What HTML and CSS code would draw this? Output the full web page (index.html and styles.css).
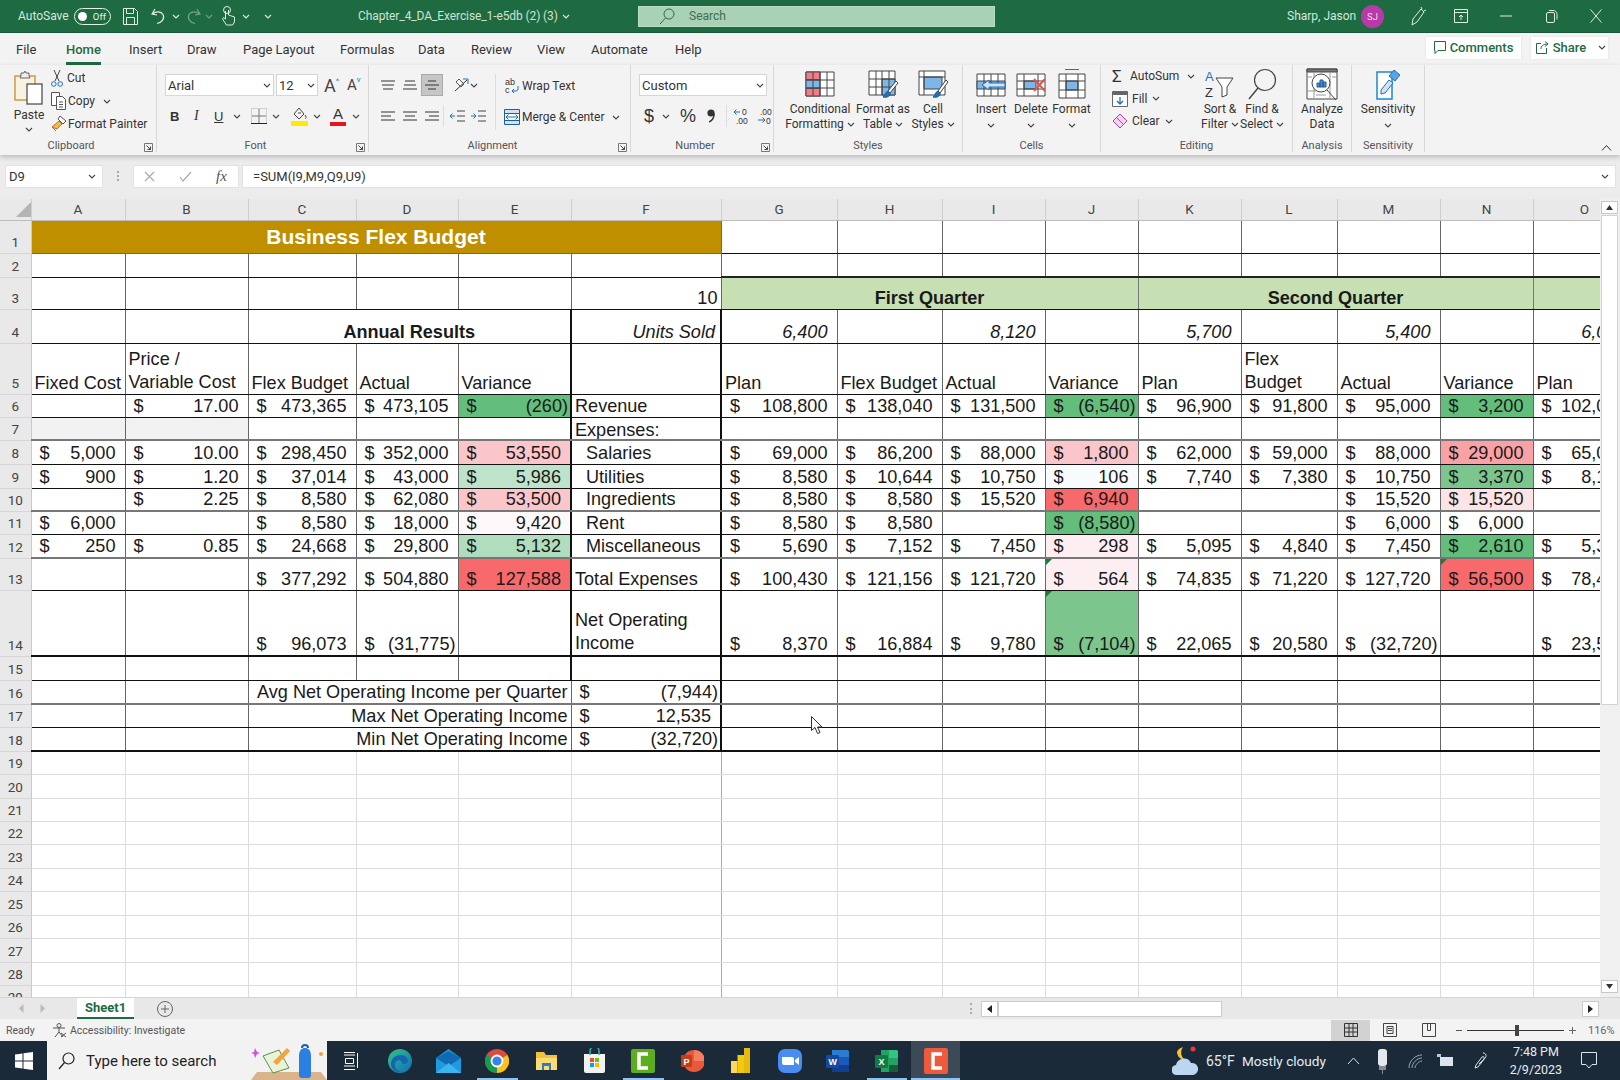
FILE: index.html
```html
<!DOCTYPE html>
<html lang="en">
<head>
<meta charset="utf-8">
<title>Chapter_4_DA_Exercise_1-e5db (2) (3) - Excel</title>
<link rel="stylesheet" href="styles.css">
</head>
<body>
<svg class="defs" aria-hidden="true">
  <symbol id="chev" viewBox="0 0 8 5"><path d="M1 1l3 3 3-3" fill="none" stroke="currentColor" stroke-width="1.1"/></symbol>
  <symbol id="launch" viewBox="0 0 9 9"><path d="M.5 8.500v-8h8v8z" fill="none" stroke="#777"/><path d="M2.500 2.500l4 4M6.500 3.500v3h-3" fill="none" stroke="#444"/></symbol>
</svg>
<div class="app">
  <header class="titlebar">
    <span class="ts ml18">AutoSave</span>
    <span class="toggle"><span class="knob"></span>Off</span>
    <svg class="ml12" width="15" height="17" viewBox="0 0 15 17" fill="none" stroke="#dfeee5"><path d="M.5.500h11l3 3v13H.5zM3.500.500v5h7v-5M3.500 16.500v-7h8v7"/></svg>
    <svg class="ml12" width="17" height="17" viewBox="0 0 17 17" fill="none" stroke="#dfeee5" stroke-width="1.200"><path d="M5 1L2 6l5 1M2.500 6C6 3 11 3 13 6.500c2 4-1 8-6 9"/></svg>
    <svg class="chv ml5 lite"><use href="#chev"/></svg>
    <svg class="ml5" width="17" height="17" viewBox="0 0 17 17" fill="none" stroke="#6fa587" stroke-width="1.200"><path d="M12 1l3 5-5 1M14.500 6C11 3 6 3 4 6.500c-2 4 1 8 6 9"/></svg>
    <svg class="chv ml3 dimc"><use href="#chev"/></svg>
    <svg class="ml8" width="15" height="20" viewBox="0 0 15 20" fill="none" stroke="#dfeee5"><circle cx="6" cy="4" r="3.500"/><path d="M4.500 5v8L2.500 11.500 1.500 13l4 6h6l2-3v-5l-6-2V4"/></svg>
    <svg class="chv ml6 lite"><use href="#chev"/></svg>
    <svg class="chv ml14 lite"><use href="#chev"/></svg>
    <span class="doc">Chapter_4_DA_Exercise_1-e5db (2) (3)<svg class="chv ml4 lite"><use href="#chev"/></svg></span>
    <div class="search">
      <svg width="16" height="17" viewBox="0 0 16 17" fill="none" stroke="#35664a"><circle cx="10" cy="6" r="5"/><path d="M6.500 10L1 16"/></svg>
      <span>Search</span>
    </div>
    <span class="user">Sharp, Jason</span>
    <span class="avatar">SJ</span>
    <svg class="ml25" width="18" height="20" viewBox="0 0 18 20" fill="none" stroke="#dfeee5"><path d="M4 13L12 3l3 3-7 10-5 3zM12 1l1 2M17 4l-2 1"/></svg>
    <svg class="ml27" width="14" height="14" viewBox="0 0 14 14" fill="none" stroke="#dfeee5"><path d="M.5.500h13v13H.5zM.5 3.500h13M7 11V6M5 8l2-2 2 2"/></svg>
    <svg class="ml32" width="12" height="2" viewBox="0 0 12 2"><path d="M0 1h12" stroke="#dfeee5"/></svg>
    <svg class="ml34" width="12" height="14" viewBox="0 0 12 14" fill="none" stroke="#dfeee5"><rect x=".5" y="3.500" width="8" height="10" rx="1.500"/><path d="M3 1.500h4c2 0 4 1 4 4v5"/></svg>
    <svg class="ml32" width="12" height="14" viewBox="0 0 12 14" fill="none" stroke="#dfeee5"><path d="M.5.500l11 13M11.500.500l-11 13"/></svg>
  </header>

  <nav class="tabs">
    <span>File</span><span class="active">Home</span><span>Insert</span><span>Draw</span><span>Page Layout</span><span>Formulas</span><span>Data</span><span>Review</span><span>View</span><span>Automate</span><span>Help</span>
    <div class="tabbtns">
      <button class="cbtn comments"><svg width="12" height="13" viewBox="0 0 12 13" fill="none" stroke="#1e6b41"><path d="M.5.500h11v9H4l-3 3v-3H.5z"/></svg>Comments</button>
      <button class="cbtn share"><svg width="13" height="13" viewBox="0 0 13 13" fill="none" stroke="#1e6b41"><path d="M5 2.500H.5v10h10V7M5 8c0-3 2-5 7-5M9 .5l3 2.500-3 2.500"/></svg>Share<svg class="chv ml8"><use href="#chev"/></svg></button>
    </div>
  </nav>

  <section class="ribbon">
    <div class="group w-clip">
      <div class="gbody clip">
        <div class="pastebtn">
          <svg width="30" height="35" viewBox="0 0 30 35" fill="none"><rect x="1" y="6" width="20" height="24" fill="#f8f2e3" stroke="#d09a3c" stroke-width="1.500"/><path d="M7 6V3h3l1-2 1 2h3v3l1 2H6z" fill="#eee" stroke="#666"/><rect x="13" y="14" width="15" height="20" fill="#fff" stroke="#444" stroke-width="1.200"/></svg>
          <span>Paste</span>
          <svg class="chv"><use href="#chev"/></svg>
        </div>
        <div class="stack">
          <div class="sr"><svg width="12" height="17" viewBox="0 0 12 17" fill="none" stroke="#444"><path d="M3 0l5 11M9 0L4 11"/><circle cx="2.800" cy="14" r="2.300" stroke="#1e70c0"/><circle cx="9.200" cy="14" r="2.300" stroke="#1e70c0"/></svg><span class="pl4">Cut</span></div>
          <div class="sr"><svg width="16" height="18" viewBox="0 0 16 18" fill="#fff" stroke="#555"><path d="M.5.500h8v13h-8z"/><path d="M5.500 4.500h6l3 3v10h-9z"/><path d="M8 10h4M8 12.500h4M8 15h4"/></svg><span class="pl1">Copy</span><svg class="chv ml8"><use href="#chev"/></svg></div>
          <div class="sr"><svg width="16" height="18" viewBox="0 0 16 18" fill="none"><path d="M9 1l6 5-3 3-5-5z" fill="#fff" stroke="#555"/><path d="M8 6l3 3-5 5-5-2z" fill="#f2b84b" stroke="#b57a1c"/><path d="M1 12l4 4" stroke="#b57a1c"/></svg><span class="pl1">Format Painter</span></div>
        </div>
      </div>
      <div class="glabel lp">Clipboard<svg class="launch"><use href="#launch"/></svg></div>
    </div>

    <div class="group w-font">
      <div class="gbody rows">
        <div class="row r-font">
          <div class="sel w109">Arial<svg class="chv"><use href="#chev"/></svg></div>
          <div class="sel w42">12<svg class="chv"><use href="#chev"/></svg></div>
          <span class="bigA ml6">A<sup>^</sup></span><span class="smA">A<sup>v</sup></span>
        </div>
        <div class="row r-fmt">
          <b class="fb">B</b><i class="fi">I</i><u class="fu">U</u><svg class="chv ml10"><use href="#chev"/></svg>
          <svg class="ml10" width="16" height="16" viewBox="0 0 16 16" fill="none"><path d="M.5.500h15v15H.5z" stroke="#aaa" stroke-dasharray="1 1"/><path d="M8 1v14M1 8h14" stroke="#777"/><path d="M0 15.500h16" stroke="#222"/></svg>
          <svg class="chv ml5"><use href="#chev"/></svg>
          <svg class="ml11" width="17" height="19" viewBox="0 0 17 19" fill="none"><path d="M8 1L3 7l5 5 5-5zM7 6h3" stroke="#444"/><path d="M14 8c1 1.500 1.500 2.500.5 3.500" stroke="#444"/><rect x="0" y="14" width="17" height="5" fill="#ffeb00"/></svg>
          <svg class="chv ml5"><use href="#chev"/></svg>
          <span class="fa">A</span>
          <svg class="chv ml6"><use href="#chev"/></svg>
        </div>
      </div>
      <div class="glabel lp">Font<svg class="launch"><use href="#launch"/></svg></div>
    </div>

    <div class="group w-align">
      <div class="gbody alignb">
        <div class="alcol">
          <div class="row r-al">
            <svg class="al" viewBox="0 0 14 10"><path d="M0 1h14M1 5h12M2 9h10"/></svg>
            <svg class="al" viewBox="0 0 14 10"><path d="M2 1h10M1 5h12M0 9h14"/></svg>
            <span class="alsel"><svg class="al" viewBox="0 0 14 10"><path d="M3 1h8M0 5h14M3 9h8"/></svg></span>
            <svg class="ml10" width="17" height="17" viewBox="0 0 17 17" fill="none"><path d="M2 14L14 3" stroke="#333"/><path d="M10 2h5v5" stroke="#1e70c0"/><path d="M3 5l3-3 5 5-3 3z" stroke="#555"/></svg>
            <svg class="chv"><use href="#chev"/></svg>
          </div>
          <div class="row r-al2">
            <svg class="al" viewBox="0 0 14 10"><path d="M0 1h14M0 5h10M0 9h14"/></svg>
            <svg class="al" viewBox="0 0 14 10"><path d="M0 1h14M2 5h10M0 9h14"/></svg>
            <svg class="al" viewBox="0 0 14 10"><path d="M0 1h14M4 5h10M0 9h14"/></svg>
            <span class="vsep"></span>
            <svg class="al2" viewBox="0 0 15 12" fill="none"><path d="M7 1h8M7 6h8M7 11h8" stroke="#444"/><path d="M5 6H0M2.500 3.500L0 6l2.500 2.500" stroke="#1e70c0"/></svg>
            <svg class="al2" viewBox="0 0 15 12" fill="none"><path d="M7 1h8M7 6h8M7 11h8" stroke="#444"/><path d="M0 6h5M2.500 3.500L5 6 2.500 8.500" stroke="#1e70c0"/></svg>
          </div>
        </div>
        <div class="alsep"></div>
        <div class="stack2">
          <div class="sr2"><svg width="16" height="18" viewBox="0 0 16 18" fill="none"><text x="1" y="8" class="mini">ab</text><text x="1" y="16" class="mini">c</text><path d="M14 9v3c0 2-2 2-3 2H8M10 12l-2 2 2 2" stroke="#1e70c0"/></svg>Wrap Text</div>
          <div class="sr2"><svg width="16" height="16" viewBox="0 0 16 16" fill="none"><path d="M.5.500h15v15H.5z" fill="#fff" stroke="#1e5f99"/><path d="M1 1h14v3H1zM1 12h14v3H1z" fill="#cfe3f5"/><path d="M2 8h12M4.500 5.500L2 8l2.500 2.500M11.500 5.500L14 8l-2.500 2.500" stroke="#1e70c0"/><path d="M.5 4.500h15M.5 11.500h15" stroke="#1e5f99"/></svg>Merge &amp; Center<svg class="chv ml6"><use href="#chev"/></svg></div>
        </div>
      </div>
      <div class="glabel lp">Alignment<svg class="launch"><use href="#launch"/></svg></div>
    </div>

    <div class="group w-num">
      <div class="gbody rows">
        <div class="row"><div class="sel w128">Custom<svg class="chv"><use href="#chev"/></svg></div></div>
        <div class="row r-num">
          <span class="nsym">$</span><svg class="chv ml8"><use href="#chev"/></svg>
          <span class="nsym ml10">%</span>
          <svg class="cm" width="8" height="14" viewBox="0 0 8 14"><circle cx="4" cy="4" r="3.600" fill="#333"/><path d="M7.200 4.500c0 4-2 7-5 8.500" fill="none" stroke="#333" stroke-width="1.500"/></svg>
          <span class="vsep"></span>
          <svg width="17" height="17" viewBox="0 0 17 17"><text x="9" y="7" class="mini2">0</text><text x="3" y="16" class="mini2">.00</text><path d="M7 4H1M3.500 1.500L1 4l2.500 2.500" fill="none" stroke="#1e70c0"/></svg>
          <svg class="ml6" width="17" height="17" viewBox="0 0 17 17"><text x="4" y="7" class="mini2">.00</text><text x="10" y="16" class="mini2">0</text><path d="M2 12h7M6.500 9.500L9 12l-2.500 2.500" fill="none" stroke="#1e70c0"/></svg>
        </div>
      </div>
      <div class="glabel lp">Number<svg class="launch"><use href="#launch"/></svg></div>
    </div>

    <div class="group w-styles">
      <div class="gbody big">
        <div class="bb w70">
          <svg class="bi" width="32" height="28" viewBox="0 0 32 28" fill="#fff" stroke="#444"><path d="M2 2h28v24H2z"/><path d="M2 2h14v8H2zM2 18h14v8H2z" fill="#f47c84"/><path d="M2 10h14v8H2z" fill="#7db6e8"/><path d="M9 2v24M16 2v24M23 2v24M2 10h28M2 18h28" fill="none"/></svg>
          <span>Conditional</span><span>Formatting<svg class="chv ml3"><use href="#chev"/></svg></span>
        </div>
        <div class="bb w56">
          <svg class="bi" width="32" height="30" viewBox="0 0 32 30" fill="#fff" stroke="#444"><path d="M2 2h26v24H2z"/><path d="M15 10h13v16H15z" fill="#7db6e8"/><path d="M9 2v24M15 2v24M22 2v24M2 10h26M2 18h26" fill="none"/><path d="M29 12L21 22l2 2 8-10z" fill="#fff"/><path d="M21 22c-3 1-3 5-5 6 4 1 8-1 7-4z" fill="#1e70c0" stroke="#1e5f99"/></svg>
          <span>Format as</span><span>Table<svg class="chv ml3"><use href="#chev"/></svg></span>
        </div>
        <div class="bb w44">
          <svg class="bi" width="32" height="30" viewBox="0 0 32 30" fill="#fff" stroke="#444"><path d="M2 2h26v24H2z"/><path d="M7 8h18v12H7z" fill="#7db6e8"/><path d="M2 8h26M7 2v24" fill="none"/><path d="M29 11L21 22l2 2 8-11z" fill="#fff"/><path d="M21 22c-3 1-3 5-5 6 4 1 8-1 7-4z" fill="#1e70c0" stroke="#1e5f99"/></svg>
          <span>Cell</span><span>Styles<svg class="chv ml3"><use href="#chev"/></svg></span>
        </div>
      </div>
      <div class="glabel">Styles</div>
    </div>

    <div class="group w-cells">
      <div class="gbody big cellsb">
        <div class="bb w40">
          <svg class="bi" width="32" height="28" viewBox="0 0 32 28" fill="#fff" stroke="#444"><path d="M2 4h28v22H2z"/><path d="M2 11h28v8H2z" fill="#7db6e8"/><path d="M9 4v22M16 4v22M23 4v22" fill="none"/><path d="M14 10l-7 5 7 5v-3h16v-4H14z" fill="#cfe3f5" stroke="#1e70c0"/></svg>
          <span>Insert</span><span class="ctr"><svg class="chv"><use href="#chev"/></svg></span>
        </div>
        <div class="bb w40">
          <svg class="bi" width="32" height="28" viewBox="0 0 32 28" fill="#fff" stroke="#444"><path d="M2 4h28v22H2z"/><path d="M9 11h12v8H9z" fill="#7db6e8"/><path d="M9 4v22M23 4v22M2 11h28M2 19h28" fill="none"/><path d="M19 9l11 12M30 9L19 21" stroke="#e0564e" stroke-width="2"/></svg>
          <span>Delete</span><span class="ctr"><svg class="chv"><use href="#chev"/></svg></span>
        </div>
        <div class="bb w41">
          <svg class="bi" width="30" height="32" viewBox="0 0 30 32" fill="#fff" stroke="#444"><path d="M2 6h26v24H2z"/><path d="M9 13h12v9H9z" fill="#7db6e8"/><path d="M9 6v24M21 6v24M2 13h26M2 22h26" fill="none"/><path d="M8 1.500h14" stroke="#1e70c0"/></svg>
          <span>Format</span><span class="ctr"><svg class="chv"><use href="#chev"/></svg></span>
        </div>
      </div>
      <div class="glabel">Cells</div>
    </div>

    <div class="group w-edit">
      <div class="gbody big editb">
        <div class="stack3">
          <div class="sr3"><span class="sigma">&#931;</span>AutoSum<svg class="chv ml6"><use href="#chev"/></svg></div>
          <div class="sr3"><svg width="16" height="16" viewBox="0 0 16 16" fill="none"><path d="M.5.500h15v15H.5z" fill="#fff" stroke="#666"/><path d="M1 1h14v3H1z" fill="#666"/><path d="M8 6v7M5 10l3 3 3-3" stroke="#1e70c0" stroke-width="1.300"/></svg><span class="pl2">Fill</span><svg class="chv ml3"><use href="#chev"/></svg></div>
          <div class="sr3"><svg width="16" height="16" viewBox="0 0 16 16"><path d="M8 1l7 7-7 7-7-7z" fill="#f4d3f0" stroke="#b345a8"/><path d="M4.500 4.500l7 7" stroke="#b345a8"/></svg><span class="pl2">Clear</span><svg class="chv ml3"><use href="#chev"/></svg></div>
        </div>
        <div class="bb w44 sortb">
          <svg class="bi" width="30" height="32" viewBox="0 0 30 32" fill="none"><text x="0" y="13" class="az az1">A</text><text x="0" y="29" class="az">Z</text><path d="M11 10h17l-6 9v8l-5 2v-10z" fill="#fff" stroke="#444"/></svg>
          <span>Sort &amp;</span><span>Filter<svg class="chv ml3"><use href="#chev"/></svg></span>
        </div>
        <div class="bb w40 sortb">
          <svg class="bi" width="30" height="32" viewBox="0 0 30 32" fill="none" stroke="#444"><circle cx="18" cy="12" r="10.500" stroke-width="1.200"/><path d="M11 20L2 31" stroke-width="1.400"/></svg>
          <span>Find &amp;</span><span>Select<svg class="chv ml3"><use href="#chev"/></svg></span>
        </div>
      </div>
      <div class="glabel">Editing</div>
    </div>

    <div class="group w-an">
      <div class="gbody big center">
        <div class="bb w56">
          <svg class="bi" width="32" height="34" viewBox="0 0 32 34" fill="#fff" stroke="#444"><path d="M1 2h30v30H1z"/><path d="M1 2h30v3H1z" fill="#777"/><path d="M1 10h5M26 10h5M1 24h9M8 5v27M24 5v27M10 28h10" fill="none" stroke="#999"/><circle cx="15" cy="16" r="9"/><path d="M11 20v-4h3v4zM14 20v-7h3v7zM17 20v-5h3v5z" fill="#4f8fd0" stroke="#1e5f99"/><path d="M21 23l9 10" fill="none"/></svg>
          <span>Analyze</span><span>Data</span>
        </div>
      </div>
      <div class="glabel">Analysis</div>
    </div>

    <div class="group w-sens">
      <div class="gbody big center">
        <div class="bb w66">
          <svg class="bi" width="30" height="32" viewBox="0 0 30 32" fill="none"><path d="M4 4h15v27H4z" fill="#fff" stroke="#1e88d2" stroke-width="1.500"/><path d="M8 22l8-10 4 3-8 10-4 1z" fill="#cfe3f5" stroke="#1e70c0"/><path d="M16 8l5-6 6 5-5 6z" fill="#5aa4e0" stroke="#1e70c0"/></svg>
          <span>Sensitivity</span><span class="ctr"><svg class="chv"><use href="#chev"/></svg></span>
        </div>
      </div>
      <div class="glabel">Sensitivity</div>
    </div>

    <svg class="collapse" width="11" height="6" viewBox="0 0 11 6" fill="none" stroke="#333"><path d="M1 5.500l4.500-5 4.500 5"/></svg>
  </section>

  <section class="fbar">
    <div class="namebox">D9<svg class="chv"><use href="#chev"/></svg></div>
    <span class="vdots"></span>
    <div class="fxbox">
      <svg width="11" height="11" viewBox="0 0 11 11" fill="none" stroke="#aaa" stroke-width="1.200"><path d="M1 1l9 9M10 1l-9 9"/></svg>
      <svg width="13" height="11" viewBox="0 0 13 11" fill="none" stroke="#aaa" stroke-width="1.200"><path d="M1 6l3 4 8-9"/></svg>
      <i class="fx">fx</i>
    </div>
    <div class="finput"><span>=SUM(I9,M9,Q9,U9)</span><svg class="chv"><use href="#chev"/></svg></div>
  </section>

  <section class="grid-area">
    <div class="sheet">
      <table>
        <colgroup><col class="c-r"><col class="c-a"><col class="c-b"><col class="c-c"><col class="c-d"><col class="c-e"><col class="c-f"><col class="c-g"><col class="c-h"><col class="c-i"><col class="c-j"><col class="c-k"><col class="c-l"><col class="c-m"><col class="c-n"><col class="c-o"></colgroup>
        <tr class="h21 head"><th class="corner"><svg width="16" height="16" viewBox="0 0 16 16"><path d="M16 1v15H1z" fill="#b4b4b4"/></svg></th><th>A</th><th>B</th><th>C</th><th>D</th><th>E</th><th>F</th><th>G</th><th>H</th><th>I</th><th>J</th><th>K</th><th>L</th><th>M</th><th>N</th><th>O</th></tr>
        <tr class="h33"><th>1</th><td colspan="6" class="banner">Business Flex Budget</td><td></td><td></td><td></td><td></td><td></td><td></td><td></td><td></td><td></td></tr>
        <tr class="h24"><th>2</th><td></td><td></td><td></td><td></td><td></td><td></td><td class="tk"></td><td class="tk"></td><td class="tk"></td><td class="tk"></td><td class="tk"></td><td class="tk"></td><td class="tk"></td><td class="tk"></td><td class="tk"></td></tr>
        <tr class="h32"><th>3</th><td></td><td></td><td></td><td></td><td></td><td class="rgt">10</td><td colspan="4" class="qtr">First Quarter</td><td colspan="4" class="qtr">Second Quarter</td><td class="qtr"></td></tr>
        <tr class="h34"><th>4</th><td></td><td></td><td colspan="3" class="annual rb">Annual Results</td><td class="rgt it rb">Units Sold</td><td class="it n">6,400</td><td></td><td class="it n">8,120</td><td></td><td class="it n">5,700</td><td></td><td class="it n">5,400</td><td></td><td class="it n">6,000</td></tr>
        <tr class="h51"><th>5</th><td class="t">Fixed Cost</td><td class="t ww">Price /<br>Variable Cost</td><td class="t">Flex Budget</td><td class="t">Actual</td><td class="t rb">Variance</td><td class="rb"></td><td class="t">Plan</td><td class="t">Flex Budget</td><td class="t">Actual</td><td class="t">Variance</td><td class="t">Plan</td><td class="t ww">Flex<br>Budget</td><td class="t">Actual</td><td class="t">Variance</td><td class="t">Plan</td></tr>
        <tr class="h23"><th>6</th><td></td><td class="n"><span class="d">$</span>17.00</td><td class="n"><span class="d">$</span>473,365</td><td class="n"><span class="d">$</span>473,105</td><td class="n neg g1 rb"><span class="d">$</span>(260)</td><td class="t rb">Revenue</td><td class="n"><span class="d">$</span>108,800</td><td class="n"><span class="d">$</span>138,040</td><td class="n"><span class="d">$</span>131,500</td><td class="n neg g1"><span class="d">$</span>(6,540)</td><td class="n"><span class="d">$</span>96,900</td><td class="n"><span class="d">$</span>91,800</td><td class="n"><span class="d">$</span>95,000</td><td class="n g1"><span class="d">$</span>3,200</td><td class="n"><span class="d">$</span>102,000</td></tr>
        <tr class="h23 gb"><th>7</th><td class="shade"></td><td class="shade"></td><td></td><td></td><td class="rb"></td><td class="t rb"><span class="nudge">Expenses:</span></td><td></td><td></td><td></td><td></td><td></td><td></td><td></td><td></td><td></td></tr>
        <tr class="h24"><th>8</th><td class="n"><span class="d">$</span>5,000</td><td class="n"><span class="d">$</span>10.00</td><td class="n"><span class="d">$</span>298,450</td><td class="n"><span class="d">$</span>352,000</td><td class="n p1 rb"><span class="d">$</span>53,550</td><td class="ind rb">Salaries</td><td class="n"><span class="d">$</span>69,000</td><td class="n"><span class="d">$</span>86,200</td><td class="n"><span class="d">$</span>88,000</td><td class="n p1"><span class="d">$</span>1,800</td><td class="n"><span class="d">$</span>62,000</td><td class="n"><span class="d">$</span>59,000</td><td class="n"><span class="d">$</span>88,000</td><td class="n p2"><span class="d">$</span>29,000</td><td class="n"><span class="d">$</span>65,000</td></tr>
        <tr class="h24"><th>9</th><td class="n"><span class="d">$</span>900</td><td class="n"><span class="d">$</span>1.20</td><td class="n"><span class="d">$</span>37,014</td><td class="n"><span class="d">$</span>43,000</td><td class="n g3 rb"><span class="d">$</span>5,986</td><td class="ind rb">Utilities</td><td class="n"><span class="d">$</span>8,580</td><td class="n"><span class="d">$</span>10,644</td><td class="n"><span class="d">$</span>10,750</td><td class="n w1"><span class="d">$</span>106</td><td class="n"><span class="d">$</span>7,740</td><td class="n"><span class="d">$</span>7,380</td><td class="n"><span class="d">$</span>10,750</td><td class="n g2"><span class="d">$</span>3,370</td><td class="n"><span class="d">$</span>8,140</td></tr>
        <tr class="h23 gb"><th>10</th><td></td><td class="n"><span class="d">$</span>2.25</td><td class="n"><span class="d">$</span>8,580</td><td class="n"><span class="d">$</span>62,080</td><td class="n p1 rb"><span class="d">$</span>53,500</td><td class="ind rb">Ingredients</td><td class="n"><span class="d">$</span>8,580</td><td class="n"><span class="d">$</span>8,580</td><td class="n"><span class="d">$</span>15,520</td><td class="n r1"><span class="d">$</span>6,940</td><td></td><td></td><td class="n"><span class="d">$</span>15,520</td><td class="n p3"><span class="d">$</span>15,520</td><td></td></tr>
        <tr class="h23"><th>11</th><td class="n"><span class="d">$</span>6,000</td><td></td><td class="n"><span class="d">$</span>8,580</td><td class="n"><span class="d">$</span>18,000</td><td class="n w2 rb"><span class="d">$</span>9,420</td><td class="ind rb">Rent</td><td class="n"><span class="d">$</span>8,580</td><td class="n"><span class="d">$</span>8,580</td><td></td><td class="n neg g1"><span class="d">$</span>(8,580)</td><td></td><td></td><td class="n"><span class="d">$</span>6,000</td><td class="n"><span class="d">$</span>6,000</td><td></td></tr>
        <tr class="h24 gb"><th>12</th><td class="n"><span class="d">$</span>250</td><td class="n"><span class="d">$</span>0.85</td><td class="n"><span class="d">$</span>24,668</td><td class="n"><span class="d">$</span>29,800</td><td class="n g4 rb"><span class="d">$</span>5,132</td><td class="ind rb">Miscellaneous</td><td class="n"><span class="d">$</span>5,690</td><td class="n"><span class="d">$</span>7,152</td><td class="n"><span class="d">$</span>7,450</td><td class="n p4"><span class="d">$</span>298</td><td class="n"><span class="d">$</span>5,095</td><td class="n"><span class="d">$</span>4,840</td><td class="n"><span class="d">$</span>7,450</td><td class="n g1"><span class="d">$</span>2,610</td><td class="n"><span class="d">$</span>5,300</td></tr>
        <tr class="h32"><th>13</th><td></td><td></td><td class="n"><span class="d">$</span>377,292</td><td class="n"><span class="d">$</span>504,880</td><td class="n r1 rb"><span class="d">$</span>127,588</td><td class="t rb">Total Expenses</td><td class="n"><span class="d">$</span>100,430</td><td class="n"><span class="d">$</span>121,156</td><td class="n"><span class="d">$</span>121,720</td><td class="n p4 tri"><span class="d">$</span>564</td><td class="n"><span class="d">$</span>74,835</td><td class="n"><span class="d">$</span>71,220</td><td class="n"><span class="d">$</span>127,720</td><td class="n r1 tri"><span class="d">$</span>56,500</td><td class="n"><span class="d">$</span>78,400</td></tr>
        <tr class="h66 bk"><th>14</th><td></td><td></td><td class="n"><span class="d">$</span>96,073</td><td class="n neg"><span class="d">$</span>(31,775)</td><td class="rb"></td><td class="t rb ww">Net Operating<br>Income</td><td class="n"><span class="d">$</span>8,370</td><td class="n"><span class="d">$</span>16,884</td><td class="n"><span class="d">$</span>9,780</td><td class="n neg g2 tri"><span class="d">$</span>(7,104)</td><td class="n"><span class="d">$</span>22,065</td><td class="n"><span class="d">$</span>20,580</td><td class="n neg"><span class="d">$</span>(32,720)</td><td></td><td class="n"><span class="d">$</span>23,500</td></tr>
        <tr class="h24"><th>15</th><td></td><td></td><td></td><td></td><td class="rb"></td><td class="rb"></td><td></td><td></td><td></td><td></td><td></td><td></td><td></td><td></td><td></td></tr>
        <tr class="h24 gb"><th>16</th><td></td><td></td><td colspan="3" class="lab">Avg Net Operating Income per Quarter</td><td class="n neg rb"><span class="d">$</span>(7,944)</td><td></td><td></td><td></td><td></td><td></td><td></td><td></td><td></td><td></td></tr>
        <tr class="h23"><th>17</th><td></td><td></td><td colspan="3" class="lab">Max Net Operating Income</td><td class="n rb"><span class="d">$</span>12,535</td><td></td><td></td><td></td><td></td><td></td><td></td><td></td><td></td><td></td></tr>
        <tr class="h24 bk"><th>18</th><td></td><td></td><td colspan="3" class="lab">Min Net Operating Income</td><td class="n neg rb"><span class="d">$</span>(32,720)</td><td></td><td></td><td></td><td></td><td></td><td></td><td></td><td></td><td></td></tr>
        <tr class="h23 gl"><th>19</th><td></td><td></td><td></td><td></td><td></td><td class="gf"></td><td></td><td></td><td></td><td></td><td></td><td></td><td></td><td></td><td></td></tr>
        <tr class="h24 gl"><th>20</th><td></td><td></td><td></td><td></td><td></td><td class="gf"></td><td></td><td></td><td></td><td></td><td></td><td></td><td></td><td></td><td></td></tr>
        <tr class="h23 gl"><th>21</th><td></td><td></td><td></td><td></td><td></td><td class="gf"></td><td></td><td></td><td></td><td></td><td></td><td></td><td></td><td></td><td></td></tr>
        <tr class="h23 gl"><th>22</th><td></td><td></td><td></td><td></td><td></td><td class="gf"></td><td></td><td></td><td></td><td></td><td></td><td></td><td></td><td></td><td></td></tr>
        <tr class="h24 gl"><th>23</th><td></td><td></td><td></td><td></td><td></td><td class="gf"></td><td></td><td></td><td></td><td></td><td></td><td></td><td></td><td></td><td></td></tr>
        <tr class="h23 gl"><th>24</th><td></td><td></td><td></td><td></td><td></td><td class="gf"></td><td></td><td></td><td></td><td></td><td></td><td></td><td></td><td></td><td></td></tr>
        <tr class="h24 gl"><th>25</th><td></td><td></td><td></td><td></td><td></td><td class="gf"></td><td></td><td></td><td></td><td></td><td></td><td></td><td></td><td></td><td></td></tr>
        <tr class="h23 gl"><th>26</th><td></td><td></td><td></td><td></td><td></td><td class="gf"></td><td></td><td></td><td></td><td></td><td></td><td></td><td></td><td></td><td></td></tr>
        <tr class="h24 gl"><th>27</th><td></td><td></td><td></td><td></td><td></td><td class="gf"></td><td></td><td></td><td></td><td></td><td></td><td></td><td></td><td></td><td></td></tr>
        <tr class="h23 gl"><th>28</th><td></td><td></td><td></td><td></td><td></td><td class="gf"></td><td></td><td></td><td></td><td></td><td></td><td></td><td></td><td></td><td></td></tr>
        <tr class="h23 gl"><th>29</th><td></td><td></td><td></td><td></td><td></td><td class="gf"></td><td></td><td></td><td></td><td></td><td></td><td></td><td></td><td></td><td></td></tr>
      </table>
      <svg class="pointer" width="12" height="18" viewBox="0 0 12 18"><path d="M.5.500v14l3.500-3 2.500 6 2.500-1-2.500-5.500H11z" fill="#fff" stroke="#333"/></svg>
    </div>
    <div class="vscroll">
      <span class="sbtn"><svg width="7" height="5" viewBox="0 0 7 5"><path d="M3.500 0l3.500 5H0z" fill="#333"/></svg></span>
      <span class="vthumb"></span>
      <span class="sbtn dn"><svg width="7" height="5" viewBox="0 0 7 5"><path d="M3.500 5L0 0h7z" fill="#333"/></svg></span>
    </div>
  </section>

  <section class="tabbar">
    <svg class="ml19" width="5" height="9" viewBox="0 0 5 9"><path d="M4.500 0v9L0 4.500z" fill="#bbb"/></svg>
    <svg class="ml16" width="5" height="9" viewBox="0 0 5 9"><path d="M.5 0v9L5 4.500z" fill="#bbb"/></svg>
    <span class="sheettab">Sheet1</span>
    <svg class="ml23" width="16" height="16" viewBox="0 0 16 16" fill="none" stroke="#666"><circle cx="8" cy="8" r="7.500"/><path d="M8 4v8M4 8h8"/></svg>
    <span class="tdots"></span>
    <div class="hscroll">
      <span class="hbtn"><svg width="5" height="8" viewBox="0 0 5 8"><path d="M5 0v8L0 4z" fill="#222"/></svg></span>
      <span class="hthumb"></span>
      <span class="hbtn end"><svg width="5" height="8" viewBox="0 0 5 8"><path d="M0 0v8l5-4z" fill="#222"/></svg></span>
    </div>
  </section>

  <footer class="status">
    <span class="ready">Ready</span>
    <svg class="ml13" width="15" height="15" viewBox="0 0 15 15" fill="none" stroke="#555"><circle cx="7" cy="2.500" r="2"/><path d="M1 5h12M7 5v4M7 9l-4 5M7 9l4 5M9 10l5 4M14 10l-5 4"/></svg>
    <span class="acc">Accessibility: Investigate</span>
    <span class="viewsel"><svg width="14" height="14" viewBox="0 0 14 14" fill="none" stroke="#333"><path d="M.5.500h13v13H.5zM5 .5v13M9 .5v13M.5 5h13M.5 9h13"/></svg></span>
    <svg class="ml13x" width="14" height="14" viewBox="0 0 14 14" fill="none" stroke="#444"><path d="M.5.500h13v13H.5zM4 3.500h6v7H4zM5 5.500h4M5 7.500h4"/></svg>
    <svg class="ml25" width="14" height="14" viewBox="0 0 14 14" fill="none" stroke="#444"><path d="M.5.500h13v13H.5zM5.500.5v7h3v-7"/></svg>
    <svg class="ml20" width="6" height="1" viewBox="0 0 6 1"><path d="M0 .5h6" stroke="#555"/></svg>
    <span class="slider"><span class="slidethumb"></span></span>
    <svg class="ml5" width="7" height="7" viewBox="0 0 7 7"><path d="M0 3.500h7M3.500 0v7" stroke="#666"/></svg>
    <span class="zoom">116%</span>
  </footer>

  <footer class="taskbar">
    <span class="win"><svg width="18" height="18" viewBox="0 0 18 18" fill="#fff"><path d="M0 2.500l7.500-1v7H0zM8.500 1.300L18 0v8.500H8.500zM0 9.500h7.500v7l-7.500-1zM8.500 9.500H18V18l-9.500-1.300z"/></svg></span>
    <div class="tsearch">
      <svg width="17" height="18" viewBox="0 0 17 18" fill="none" stroke="#222" stroke-width="1.200"><circle cx="10.500" cy="6.500" r="5.500"/><path d="M6.500 10.500L1 17"/></svg>
      <span>Type here to search</span>
      <svg class="promo" width="76" height="38" viewBox="0 0 76 38"><path d="M0 38l6-8h64l6 8z" fill="#d9b48a"/><path d="M12 14l16-6 10 18-16 5z" fill="#e9f3d8" stroke="#5a8f4e"/><path d="M22 20l14-14 3 3-13 14z" fill="#f2a33c"/><path d="M48 14c0-6 3-8 6-8s6 2 6 8v19c0 2-1 3-3 3h-6c-2 0-3-1-3-3z" fill="#2a7fe0"/><path d="M51 6c0-4 6-4 6 0" fill="none" stroke="#1d5fb0" stroke-width="2"/><path d="M4 6l2 4 3 1-3 1-2 4-1-4-3-1 3-1z" fill="#d44ce0"/><circle cx="70" cy="12" r="2" fill="#f2a33c"/></svg>
    </div>
    <span class="ti"><svg width="16" height="20" viewBox="0 0 16 20" fill="none" stroke="#fff"><path d="M1 4h11M1 15h11M2.500 7.500h8v5h-8zM14.500 2v15M1 1.500h11M1 18.500h11"/></svg></span>
    <span class="ti"><svg width="24" height="24" viewBox="0 0 24 24"><defs><linearGradient id="ed" x1="0" y1="0" x2="1" y2="1"><stop offset="0" stop-color="#33c481"/><stop offset="1" stop-color="#0f6cbd"/></linearGradient></defs><circle cx="12" cy="12" r="12" fill="url(#ed)"/><path d="M3 15c0-6 5-9 10-9 4 0 7 3 7 6 0 2-2 3-5 3-1 0-1-1-1-2-2-3-7-2-7 3 0 4 4 7 8 7-6 1-12-2-12-8z" fill="#1565b0"/></svg></span>
    <span class="ti"><svg width="25" height="24" viewBox="0 0 25 24"><path d="M0 9L12.500 0 25 9v15H0z" fill="#1e9ae0"/><path d="M0 9l12.500 8L25 9l-12.500-7z" fill="#106ab0"/><path d="M0 24l12.500-10L25 24z" fill="#3cb4f0"/></svg></span>
    <span class="ti on"><svg width="24" height="24" viewBox="0 0 24 24"><circle cx="12" cy="12" r="12" fill="#dd4b3e"/><path d="M12 12L22.400 6A12 12 0 0 1 12 24z" fill="#f9c21d"/><path d="M12 12v12A12 12 0 0 1 1.600 6z" fill="#169c4f"/><circle cx="12" cy="12" r="5.500" fill="#3b82e8" stroke="#fff" stroke-width="1.800"/></svg></span>
    <span class="ti"><svg width="23" height="21" viewBox="0 0 23 21"><path d="M1 2h8l2 3h11v15H1z" fill="#f2c23c"/><path d="M1 8h21v12H1z" fill="#fbdc72"/><path d="M7 13h9v7h-2v-4H9v4H7z" fill="#2a7fc4"/></svg></span>
    <span class="ti"><svg width="23" height="25" viewBox="0 0 23 25"><path d="M1 6h21v17a2 2 0 0 1-2 2H3a2 2 0 0 1-2-2z" fill="#f2f2f2"/><path d="M7 7V3a4 4 0 0 1 9 0v4" fill="none" stroke="#2bb7b5" stroke-width="1.500"/><path d="M7 10h4v4H7z" fill="#f25022"/><path d="M12 10h4v4h-4z" fill="#7fba00"/><path d="M7 15h4v4H7z" fill="#00a4ef"/><path d="M12 15h4v4h-4z" fill="#ffb900"/></svg></span>
    <span class="ti on"><svg width="24" height="24" viewBox="0 0 24 24"><rect width="24" height="24" rx="2" fill="#5cae1e"/><path d="M17 5H8v14h9" fill="none" stroke="#fff" stroke-width="3.500"/></svg></span>
    <span class="ti"><svg width="24" height="24" viewBox="0 0 24 24"><circle cx="14" cy="12" r="11" fill="#e8593a"/><path d="M14 1a11 11 0 0 1 11 11H14z" fill="#f47e5d"/><rect x="1" y="6" width="11" height="12" rx="1" fill="#c43e1c"/><text x="3.500" y="15.500" class="tico">P</text></svg></span>
    <span class="ti"><svg width="19" height="25" viewBox="0 0 19 25"><path d="M13 0h6v25h-6z" fill="#e8b90e"/><path d="M6.500 7h6.500v18H6.500z" fill="#f2c811"/><path d="M0 13h6.500v12H0z" fill="#fbd85c"/></svg></span>
    <span class="ti"><svg width="24" height="24" viewBox="0 0 24 24"><rect width="24" height="24" rx="7" fill="#4a8cf0"/><path d="M4 8h10a2 2 0 0 1 2 2v6H6a2 2 0 0 1-2-2zM17 11l4-3v8l-4-3z" fill="#fff"/></svg></span>
    <span class="ti"><svg width="24" height="24" viewBox="0 0 24 24"><path d="M6 1h15a2 2 0 0 1 2 2v18a2 2 0 0 1-2 2H6z" fill="#2b7cd3"/><path d="M6 16h17v5a2 2 0 0 1-2 2H6z" fill="#103f91"/><path d="M6 8h17v8H6z" fill="#185abd"/><rect x="0" y="6" width="13" height="13" rx="1" fill="#124a9e"/><text x="2.500" y="16" class="tico">W</text></svg></span>
    <span class="ti on"><svg width="24" height="24" viewBox="0 0 24 24"><path d="M6 1h15a2 2 0 0 1 2 2v18a2 2 0 0 1-2 2H6z" fill="#21a366"/><path d="M14 1h7a2 2 0 0 1 2 2v6h-9z" fill="#33c481"/><path d="M14 16h9v5a2 2 0 0 1-2 2h-7z" fill="#185c37"/><rect x="0" y="6" width="13" height="13" rx="1" fill="#107c41"/><text x="3.500" y="16" class="tico">X</text></svg></span>
    <span class="ti on hl"><svg width="24" height="26" viewBox="0 0 24 26"><rect width="24" height="26" rx="2" fill="#ee5a3c"/><path d="M18 6H9v14h9" fill="none" stroke="#fff" stroke-width="3.500"/></svg></span>
    <svg class="weather" width="26" height="30" viewBox="0 0 26 30"><path d="M11 1a9 9 0 0 0 2 13A9 9 0 0 1 5 7c0-3 3-5 6-6z" fill="#f2c23c"/><circle cx="21" cy="3" r="2.500" fill="#e83a3a"/><path d="M5 29a5 5 0 0 1-1-10 8 8 0 0 1 15-2 6 6 0 0 1 2 12z" fill="#bcd6f2"/></svg>
    <span class="temp">65°F</span>
    <span class="cond">Mostly cloudy</span>
    <svg class="ml21" width="13" height="8" viewBox="0 0 13 8" fill="none" stroke="#ddd"><path d="M1 7l5.500-6L12 7"/></svg>
    <svg class="ml17" width="11" height="26" viewBox="0 0 11 26"><rect x="1" y="1" width="9" height="17" rx="3" fill="#e4e8ee"/><path d="M2 18h7v4H2z" fill="#889"/><path d="M5.500 22v4" stroke="#889"/></svg>
    <svg class="ml20" width="14" height="14" viewBox="0 0 14 14" fill="none" stroke="#9aa6b3"><path d="M1 14C1 7 7 1 14 1M4 14c0-5 5-10 10-10M7 14c0-3 4-7 7-7"/></svg>
    <svg class="ml15" width="17" height="13" viewBox="0 0 17 13"><rect x="3" y="3" width="13" height="9" fill="#dde3ea"/><path d="M0 0h4v3H0z" fill="#9dd1f0"/></svg>
    <svg class="ml20" width="14" height="17" viewBox="0 0 14 17" fill="none" stroke="#dde3ea"><path d="M9 1c3 0 4 3 2 5L4 15l-3 1 1-3 6-8c1-1 3 0 2 2L5 12"/></svg>
    <div class="clock"><span>7:48 PM</span><span>2/9/2023</span></div>
    <svg class="ml15" width="16" height="17" viewBox="0 0 16 17" fill="none" stroke="#dde3ea"><path d="M.5.500h15v12H11l-3 3.500-3-3.500H.5z"/></svg>
  </footer>
</div>
</body>
</html>
```
FILE: styles.css
```css
* { box-sizing: border-box; }
html, body { margin: 0; padding: 0; }
body { width: 1620px; height: 1080px; overflow: hidden; background: #f3f3f3; font-family: Roboto, "Noto Sans", sans-serif; color: #333; }
.defs { position: absolute; width: 0; height: 0; }
.app { display: flex; flex-direction: column; width: 1620px; height: 1080px; }
svg { flex: none; display: block; }
button { font: inherit; }

.ml3 { margin-left: 3px; } .ml4 { margin-left: 4px; } .ml5 { margin-left: 5px; } .ml6 { margin-left: 6px; }
.ml8 { margin-left: 8px; } .ml9 { margin-left: 9px; } .ml10 { margin-left: 10px; } .ml11 { margin-left: 11px; }
.ml12 { margin-left: 12px; } .ml13 { margin-left: 11px; } .ml13x { margin-left: 13px; } .ml14 { margin-left: 14px; } .ml15 { margin-left: 15px; } .ml16 { margin-left: 16px; } .ml17 { margin-left: 17px; } .ml18 { margin-left: 18px; }
.ml19 { margin-left: 19px; } .ml20 { margin-left: 20px; } .ml21 { margin-left: 21px; } .ml22 { margin-left: 22px; } .ml23 { margin-left: 23px; }
.ml25 { margin-left: 25px; } .ml26 { margin-left: 26px; } .ml27 { margin-left: 27px; } .ml32 { margin-left: 32px; } .ml34 { margin-left: 34px; }
.pl1 { padding-left: 1px; } .pl2 { padding-left: 2px; } .pl3 { padding-left: 3px; } .pl4 { padding-left: 4px; }

.chv { width: 8px; height: 5px; color: #444; }
.lite { color: #dfeee5; }
.dimc { color: #6fa587; }

/* title bar */
.titlebar { height: 33px; flex: none; display: flex; align-items: center; background: #1e6b41; color: #d6e7dc; font-size: 12px; border-bottom: 1px solid #17583a; }
.ts { width: 50px; }
.toggle { display: flex; align-items: center; justify-content: flex-end; gap: 3px; width: 37px; height: 17px; margin-left: 6px; padding-right: 4px; border: 1px solid #e8f2ec; border-radius: 9px; font-size: 9.500px; color: #e8f2ec; }
.knob { width: 9px; height: 9px; border-radius: 50%; background: #fff; margin-right: auto; margin-left: 3px; }
.doc { display: flex; align-items: center; margin-left: 86px; width: 280px; color: #cfe1d6; letter-spacing: -.1px; }
.search { display: flex; align-items: center; gap: 14px; width: 357px; height: 21px; padding-left: 20px; background: #a9d2b5; color: #3f6d51; border: 1px solid #b9dcc4; }
.user { margin-left: 292px; width: 64px; white-space: nowrap; color: #d6e7dc; }
.avatar { display: flex; flex: none; align-items: center; justify-content: center; width: 23px; height: 23px; margin-left: 10px; border-radius: 50%; background: #b83aa8; color: #f4dcf1; font-size: 9.500px; }

/* tabs */
.tabs { height: 32px; flex: none; display: grid; grid-template-columns: 50px 63px 58px 56px 97px 78px 53px 66px 54px 84px 60px 1fr; align-items: center; padding-left: 16px; background: #f3f3f3; font-size: 13px; color: #333; position: relative; }
.tabs > span { justify-self: start; white-space: nowrap; }
.tabs .active { color: #1e6b41; font-weight: 500; position: relative; }
.tabs .active::after { content: ""; position: absolute; left: 0; right: 0; bottom: -8px; height: 3px; background: #1e6b41; }
.tabbtns { display: flex; justify-content: flex-end; gap: 10px; padding-right: 12px; margin-top: -3px; }
.cbtn { display: flex; align-items: center; justify-content: center; gap: 4px; height: 22px; border: 0; background: #fff; color: #1e6b41; font-size: 13px; font-weight: 500; box-shadow: 0 0 2px #ddd; padding: 0; }
.comments { width: 95px; }
.share { width: 77px; padding-left: 3px; }

/* ribbon */
.ribbon { height: 90px; flex: none; display: flex; background: #f3f3f3; font-size: 12px; color: #333; box-shadow: 0 2px 5px rgba(0,0,0,.22); position: relative; z-index: 2; }
.group { display: flex; flex-direction: column; height: 87px; border-right: 1px solid #d8d8d8; }
.gbody { flex: 1; min-height: 0; }
.glabel { height: 17px; flex: none; text-align: center; font-size: 11px; line-height: 22px; color: #555; position: relative; }
.lp { padding-right: 14px; }
.launch { position: absolute; right: 3px; top: 8px; width: 9px; height: 9px; }
.w-clip { width: 157px; } .w-font { width: 212px; } .w-align { width: 262px; } .w-num { width: 143px; }
.w-styles { width: 189px; } .w-cells { width: 138px; } .w-edit { width: 192px; } .w-an { width: 59px; } .w-sens { width: 73px; }
.clip { display: flex; padding-left: 13px; }
.pastebtn { display: flex; flex-direction: column; align-items: center; width: 32px; padding-top: 5px; }
.pastebtn span { margin-top: 3px; line-height: 15px; }
.pastebtn .chv { margin-top: 4px; }
.stack { display: flex; flex-direction: column; margin-left: 5px; padding-top: 2px; }
.sr { display: flex; align-items: center; height: 23.500px; white-space: nowrap; }
.sr svg:first-child { margin-left: 1px; }
.rows { display: flex; flex-direction: column; padding: 9px 0 0 8px; gap: 9px; }
.row { display: flex; align-items: center; height: 22px; }
.sel { display: flex; align-items: center; justify-content: space-between; height: 22px; padding: 0 2px; background: #fff; border: 1px solid #d6d6d6; font-size: 13px; }
.w109 { width: 109px; margin-right: 2px; } .w42 { width: 42px; } .w128 { width: 128px; }
.bigA { font-size: 18px; width: 23px; color: #444; }
.smA { font-size: 15px; width: 20px; color: #444; }
.bigA sup, .smA sup { font-size: 8px; color: #1e70c0; vertical-align: 8px; line-height: 0; }
.r-fmt { padding-left: 5px; font-family: "Liberation Serif", serif; }
.fb { font: 700 13px "Liberation Sans", sans-serif; width: 24px; }
.fi { font-size: 14px; width: 20px; }
.fu { font: 13px "Liberation Sans", sans-serif; width: 9px; }
.fa { font: 15px "Liberation Sans", sans-serif; margin-left: 9px; width: 16px; border-bottom: 4px solid #e8141c; text-align: center; line-height: 16px; }
.alignb { display: flex; padding: 9px 0 0 8px; }
.alcol { display: flex; flex-direction: column; gap: 9px; width: 118px; }
.al { width: 14px; height: 10px; margin: 0 4px; fill: none; stroke: #333; }
.alsel { display: flex; align-items: center; justify-content: center; width: 22px; height: 22px; background: #c6c6c6; border: 1px solid #aaa; }
.r-al2 { padding-left: 4px; }
.r-al2 .al { margin: 0 7px 0 0; }
.r-al2 .al + .al { margin-left: 1px; }
.r-al2 .vsep { margin-left: -3px; }
.al2 { width: 15px; height: 12px; margin-left: 6px; }
.vsep { width: 1px; height: 22px; background: #ddd; margin-left: 1px; }
.alsep { width: 1px; height: 56px; background: #dcdcdc; }
.stack2 { display: flex; flex-direction: column; gap: 9px; padding: 1px 0 0 8px; }
.sr2 { display: flex; align-items: center; gap: 2px; height: 22px; font-size: 12px; white-space: nowrap; }
.mini { font: 9px "Liberation Sans", sans-serif; fill: #333; }
.mini2 { font: 8.500px "Liberation Sans", sans-serif; fill: #333; }
.r-num { padding-left: 5px; }
.nsym { font: 18px "Liberation Sans", sans-serif; color: #333; }
.cm { margin-left: 11px; margin-right: 10px; }
.r-num .vsep { margin-right: 6px; }
.big { display: flex; padding-top: 2px; }
.bb { display: flex; flex-direction: column; align-items: center; line-height: 15px; white-space: nowrap; font-size: 12px; }
.bb span { display: flex; align-items: center; height: 15px; }
.bi { height: 34px; margin-bottom: .5px; }
.ctr .chv { margin-top: 2px; }
.w40 { width: 40px; } .w41 { width: 41px; } .w44 { width: 44px; } .w56 { width: 56px; } .w66 { width: 66px; } .w70 { width: 70px; }
.w-styles .big { padding-left: 11px; }
.cellsb { padding-left: 8px; }
.center { justify-content: center; }
.editb { padding: 0 0 0 11px; }
.sortb { padding-top: 2px; }
.stack3 { display: flex; flex-direction: column; width: 86px; }
.sr3 { display: flex; align-items: center; height: 22.500px; white-space: nowrap; gap: 2px; }
.sigma { font-size: 17px; width: 16px; }
.az { font: 13px "Liberation Sans", sans-serif; fill: #333; }
.az1 { fill: #1e70c0; }
.collapse { position: absolute; right: 8px; bottom: 4px; }

/* formula bar */
.fbar { height: 44px; flex: none; display: flex; padding-top: 10px; padding-left: 5px; background: #ececec; font-size: 12.500px; }
.namebox, .fxbox, .finput { display: flex; align-items: center; height: 23px; background: #fff; border: 1px solid #e2e2e2; }
.namebox { width: 98px; justify-content: space-between; padding: 0 6px 0 3px; font-size: 13px; }
.vdots { width: 2px; height: 10px; margin: 6px 14px 0 14px; border-left: 2px dotted #aaa; }
.fxbox { width: 106px; gap: 24px; padding-left: 10px; }
.fx { font: italic 15px "Liberation Serif", serif; color: #555; }
.finput { width: 1374px; margin-left: 3px; justify-content: space-between; padding: 0 6px 0 10px; font: 13px Roboto, sans-serif; }

/* grid */
.grid-area { flex: none; height: 798px; display: flex; background: #fff; }
.sheet { width: 1600px; height: 798px; overflow: hidden; position: relative; }
table { border-collapse: collapse; table-layout: fixed; width: 1636px; font: 18.100px/21px "Liberation Sans", Arial, sans-serif; color: #1a1a1a; }
.c-r { width: 31px; } .c-a { width: 94px; } .c-b { width: 123px; } .c-c { width: 108px; } .c-d { width: 102px; } .c-e { width: 113px; }
.c-f { width: 150px; } .c-g { width: 116px; } .c-h { width: 105px; } .c-i { width: 103px; } .c-j { width: 93px; } .c-k { width: 103px; } .c-l { width: 96px; } .c-m { width: 103px; } .c-n { width: 93px; } .c-o { width: 103px; }
.h21 { height: 21px; } .h23 { height: 23px; } .h24 { height: 24px; } .h32 { height: 32px; } .h33 { height: 33px; } .h34 { height: 34px; } .h51 { height: 51px; } .h66 { height: 66px; }
th { padding: 0 0 3px; font: 400 13.500px/16px Roboto, sans-serif; color: #444; background: #e9e9e9; border-right: 1px solid #c9c9c9; border-bottom: 1px solid #d6d6d6; vertical-align: bottom; }
.head th { padding: 0 0 1px; vertical-align: middle; font-size: 13.500px; border-right: 1px solid #cfcfcf; border-bottom: 1px solid #bdbdbd; }
.corner svg { margin-left: auto; }
td { padding: 0; vertical-align: bottom; white-space: nowrap; overflow: hidden; border-right: 1px solid #666; border-bottom: 1px solid #111; position: relative; }
.ww { line-height: 23px; }
.t { padding-left: 3px; }
.ind { padding-left: 14px; }
.n { padding: 0 9px 0 8px; text-align: right; }
.neg { padding-right: 2px; }
.d { float: left; }
.nudge { position: relative; top: 2px; }
.rgt { text-align: right; padding-right: 3px; }
.rgt.it { padding-right: 5px; }
.it { font-style: italic; }
.banner { background: #bf8f00; color: #fff; font: 700 21px/32px "Liberation Sans", sans-serif; text-align: center; vertical-align: middle; border-color: #8a6a10; }
.qtr { background: #c6e0b4; font-weight: 700; text-align: center; border-right: 1px solid #777; }
.tk { border-bottom: 2px solid #222; }
.annual { font-weight: 700; text-align: center; }
.rb { border-right: 2px solid #111; }
.lab { text-align: right; padding-right: 3px; border-left: 1px solid #111; }
.shade { background: #f2f2f2; }
.gb td { border-bottom: 2px solid #777; }
.bk td { border-bottom: 2px solid #111; }
.gl td { border-right: 1px solid #dcdcdc; border-bottom: 1px solid #dcdcdc; }
.gl td.gf { border-right: 1px solid #aaa; }
.g1 { background: #63be7b; } .g2 { background: #7cc68e; } .g3 { background: #bfe3ca; } .g4 { background: #b1ddbf; }
.p1 { background: #fbc6ca; } .p2 { background: #f9a2a6; } .p3 { background: #fce4e6; } .p4 { background: #fdeff1; }
.r1 { background: #f8696b; } .w1 { background: #f8fbfd; } .w2 { background: #fdf8fa; }
.tri::before { content: ""; position: absolute; left: 0; top: 0; border-style: solid; border-width: 6px 6px 0 0; border-color: #1e7a3c transparent transparent transparent; }
.pointer { position: absolute; left: 811px; top: 517px; }
.vscroll { flex: none; width: 20px; height: 798px; display: flex; flex-direction: column; padding: 2px 2px 4px 1px; background: #f0f0f0; }
.sbtn { display: flex; align-items: center; justify-content: center; height: 13px; background: #fff; border: 1px solid #c8c8c8; }
.vthumb { height: 490px; margin-top: 1px; background: #fff; border: 1px solid #d2d2d2; }
.sbtn.dn { margin-top: auto; }

/* sheet tabs */
.tabbar { height: 22px; flex: none; display: flex; align-items: center; background: #e8e8e8; border-top: 1px solid #d4d4d4; position: relative; }
.sheettab { width: 57px; height: 21px; margin-left: 32px; text-align: center; background: #fff; color: #1e6b41; font-size: 13px; font-weight: 700; line-height: 19px; border-bottom: 2px solid #1e6b41; }
.tdots { width: 2px; height: 11px; margin-left: 797px; border-left: 2px dotted #aaa; }
.hscroll { display: flex; align-items: center; width: 618px; height: 16px; margin-left: 9px; }
.hbtn { display: flex; align-items: center; justify-content: center; width: 17px; height: 16px; background: #fff; border: 1px solid #ccc; }
.hbtn.end { margin-left: auto; }
.hthumb { width: 224px; height: 16px; background: #fff; border: 1px solid #ccc; }

/* status */
.status { height: 22px; flex: none; display: flex; align-items: center; background: #f3f3f3; font-size: 10.500px; color: #555; }
.ready { margin-left: 6px; width: 35px; }
.acc { margin-left: 3px; width: 1084px; white-space: nowrap; font-size: 10.500px; }
.viewsel { display: flex; align-items: center; justify-content: center; width: 39px; height: 21px; margin-left: 177px; background: #d2d2d2; }
.slider { width: 97px; height: 1px; margin-left: 5px; background: #333; position: relative; display: block; }
.slidethumb { position: absolute; left: 48px; top: -5px; width: 4px; height: 11px; background: #444; }
.zoom { margin-left: 12px; font-size: 11px; color: #666; }

/* taskbar */
.taskbar { flex: 1; display: flex; align-items: center; background: #1b2a39; color: #e6ebf0; }
.win { display: flex; justify-content: center; width: 47px; }
.tsearch { display: flex; align-items: center; width: 280px; height: 39px; padding-left: 11px; background: #f2f2f2; color: #222; font-size: 15px; position: relative; }
.tsearch span { margin-left: 11px; }
.promo { position: absolute; right: 0; bottom: 0; }
.ti { display: flex; align-items: center; justify-content: center; width: 48.700px; height: 39px; position: relative; }
.ti.on::after { content: ""; position: absolute; left: 4px; right: 4px; bottom: 0; height: 2px; background: #8cc4f2; }
.ti.hl { background: #3c4a58; }
.ti.hl::after { left: 0; right: 0; }
.tico { font: 700 9px "Liberation Sans", sans-serif; fill: #fff; }
.weather { margin-left: 212px; }
.temp { margin-left: 8px; font-size: 14px; width: 30px; white-space: nowrap; }
.cond { margin-left: 6px; font-size: 13.600px; white-space: nowrap; }
.clock { display: flex; flex-direction: column; align-items: center; gap: 2px; width: 60px; margin-left: 18px; font-size: 12.500px; line-height: 16px; }
```
